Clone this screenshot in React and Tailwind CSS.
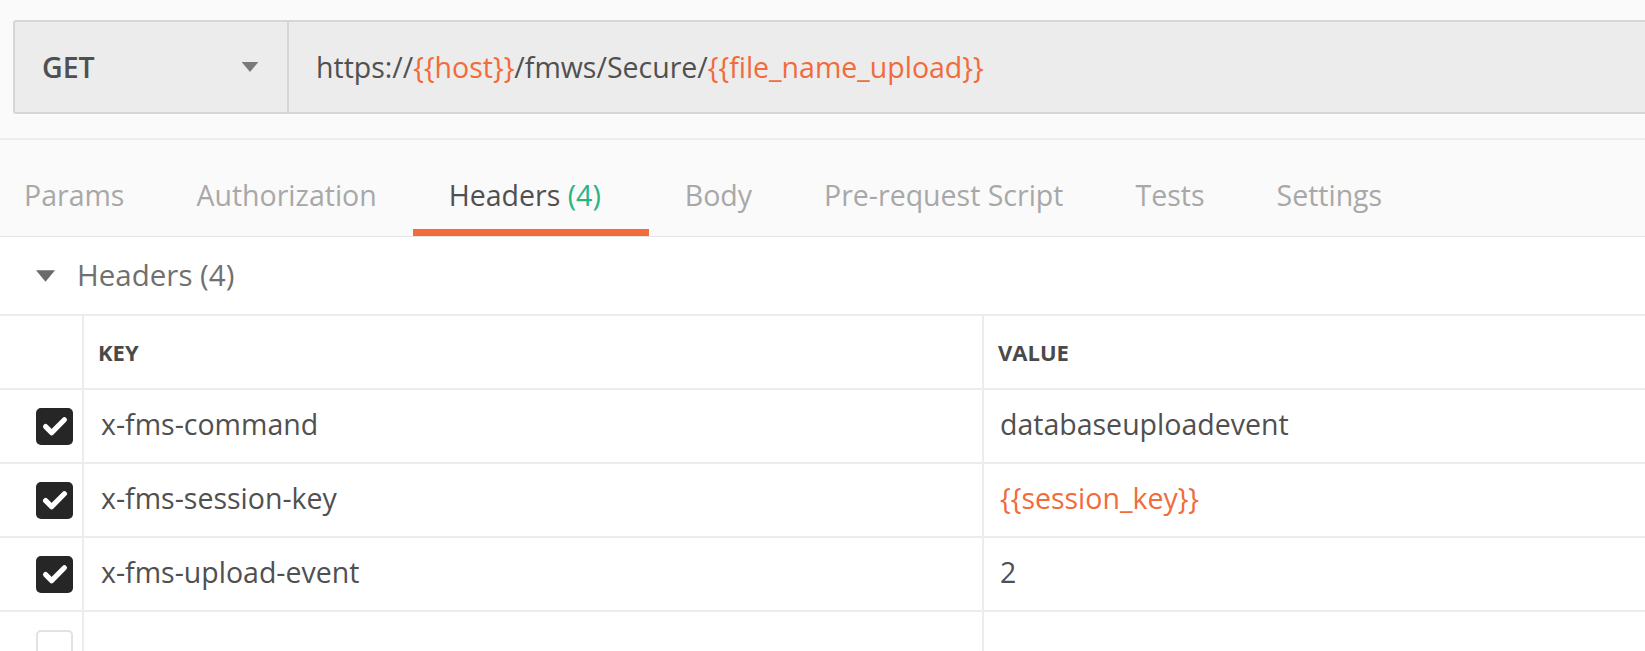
import React from "react";

const TABS = [
  { label: "Params" },
  { label: "Authorization" },
  { label: "Headers", count: 4, active: true },
  { label: "Body" },
  { label: "Pre-request Script" },
  { label: "Tests" },
  { label: "Settings" },
];

const ROWS = [
  { key: "x-fms-command", value: "databaseuploadevent" },
  { key: "x-fms-session-key", value: "{{session_key}}", variable: true },
  { key: "x-fms-upload-event", value: "2" },
];

const Caret = ({ className }) => (
  <svg viewBox="0 0 10 6" className={className} fill="currentColor">
    <path d="M0 0h10L5 6z" />
  </svg>
);

const Checkbox = ({ checked }) =>
  checked ? (
    <span className="w-[37px] h-[37px] rounded-[5px] bg-[#262626] flex items-center justify-center">
      <svg viewBox="0 0 24 24" className="w-[30px] h-[30px]" fill="none" stroke="white" strokeWidth="4.2" strokeLinecap="round" strokeLinejoin="round">
        <path d="M4.5 12.5l4.8 4.8L19.5 7" />
      </svg>
    </span>
  ) : (
    <span className="w-[37px] h-[37px] rounded-[5px] border-2 border-[#e2e2e2] bg-white" />
  );

const Var = ({ children }) => <span className="text-[#f26b3a]">{children}</span>;

export default function App() {
  return (
    <div className="w-[1645px] h-[651px] overflow-hidden bg-white text-[#505050]" style={{ fontFamily: "'Open Sans', 'Noto Sans', sans-serif" }}>
      {/* request bar */}
      <div className="bg-[#fafafa] pt-[20px] pb-[24px] pl-[13px] border-b-2 border-[#ececec]">
        <div className="flex h-[94px] -mr-[10px] bg-[#ececec] border-2 border-[#d6d6d6] rounded-l-[3px]">
          <div className="w-[274px] shrink-0 flex items-center justify-between pl-[27px] pr-[28px] border-r-2 border-[#d6d6d6]">
            <span className="text-[28.5px] font-semibold text-[#505050]">GET</span>
            <Caret className="w-[18px] h-[10px] text-[#7a7a7a]" />
          </div>
          <div className="flex items-center pl-[27px] text-[28.5px] text-[#505050] whitespace-nowrap">
            https://<Var>{"{{host}}"}</Var>/fmws/Secure/<Var>{"{{file_name_upload}}"}</Var>
          </div>
        </div>
      </div>

      {/* tabs */}
      <div className="bg-[#fafafa] border-b border-[#e6e6e6] flex -ml-[12px] h-[97px]">
        {TABS.map((t) => (
          <div
            key={t.label}
            className={`flex flex-col pt-[35px] text-[28.5px] leading-[40px] whitespace-nowrap ${t.active ? "pl-[36px] pr-[48px] text-[#505050] border-b-[7px] border-[#f26b3a]" : "px-[36px] text-[#a8a8a8]"}`}
          >
            <span>
              {t.label}
              {t.count != null && <span className="text-[#26b47f]"> ({t.count})</span>}
            </span>
          </div>
        ))}
      </div>

      {/* section header */}
      <div className="flex items-center h-[77px] pl-[36px] gap-[22px] text-[29.5px] text-[#707070]">
        <Caret className="w-[19px] h-[12px] text-[#6a6a6a]" />
        <span>Headers (4)</span>
      </div>

      {/* table */}
      <div className="border-t-2 border-[#ececec]">
        <div className="flex h-[74px] border-b-2 border-[#ececec] text-[22px] font-bold text-[#4a4a4a]">
          <div className="w-[84px] shrink-0 border-r-2 border-[#ececec]" />
          <div className="w-[900px] shrink-0 border-r-2 border-[#ececec] flex items-center pl-[14px]">KEY</div>
          <div className="flex-1 flex items-center pl-[14px]">VALUE</div>
        </div>
        {ROWS.map((r) => (
          <div key={r.key} className="flex h-[74px] border-b-2 border-[#ececec] text-[28.5px]">
            <div className="w-[84px] shrink-0 border-r-2 border-[#ececec] flex items-center pl-[36px]">
              <Checkbox checked />
            </div>
            <div className="w-[900px] shrink-0 border-r-2 border-[#ececec] flex items-center pl-[17px] pb-[4px]">{r.key}</div>
            <div className="flex-1 flex items-center pl-[16px] pb-[4px]">{r.variable ? <Var>{r.value}</Var> : r.value}</div>
          </div>
        ))}
        <div className="flex h-[74px]">
          <div className="w-[84px] shrink-0 border-r-2 border-[#ececec] flex items-start pt-[18px] pl-[36px]">
            <Checkbox checked={false} />
          </div>
          <div className="w-[900px] shrink-0 border-r-2 border-[#ececec]" />
          <div className="flex-1" />
        </div>
      </div>
    </div>
  );
}
